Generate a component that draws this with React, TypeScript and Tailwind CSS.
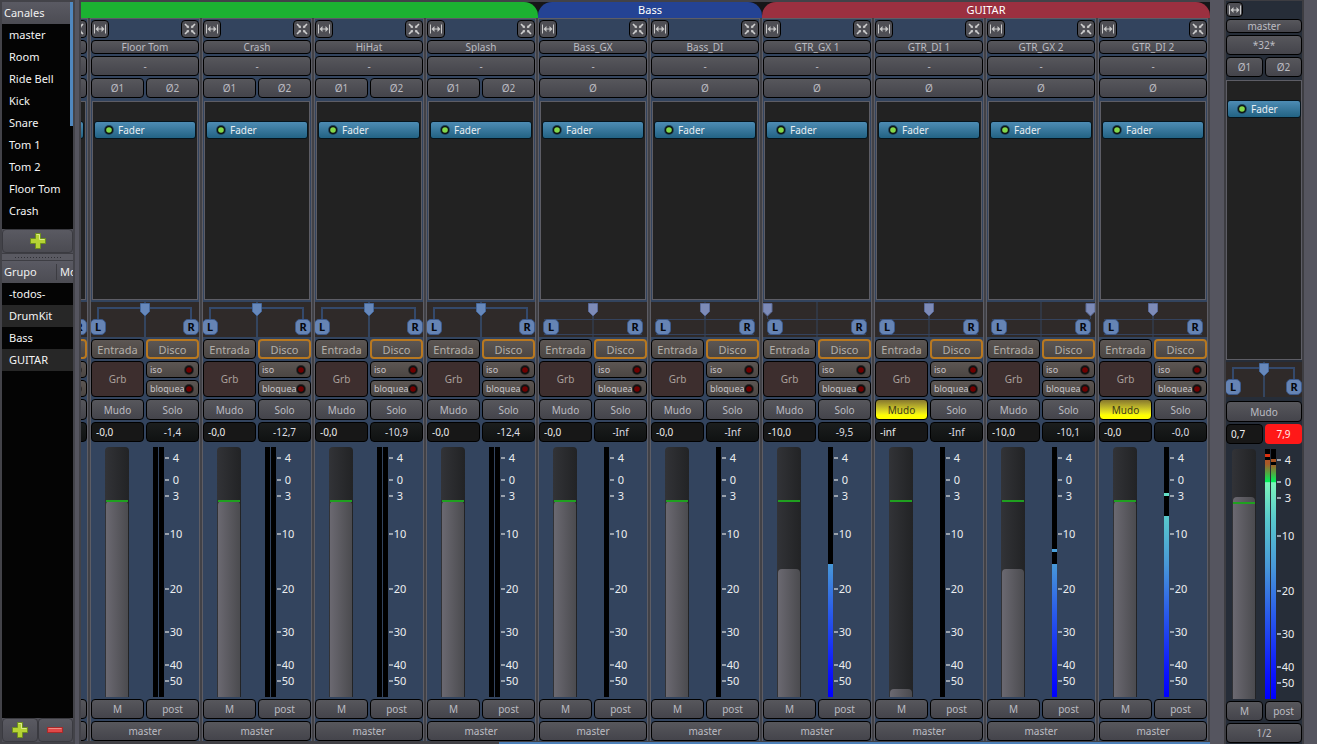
import React from "react";

type StripData = {
  name: string;
  stereo: boolean;
  pan: number;
  gain: string;
  peak: string;
  fader: number;
  muted?: boolean;
  level?: number;
  hold?: number;
  collapsed?: boolean;
};

const METER_HEIGHT = 250;

const strips: StripData[] = [
  { name: "Tom 2", stereo: true, pan: 50, gain: "", peak: "", fader: 54, collapsed: true },
  { name: "Floor Tom", stereo: true, pan: 50, gain: "-0,0", peak: "-1,4", fader: 54 },
  { name: "Crash", stereo: true, pan: 50, gain: "-0,0", peak: "-12,7", fader: 54 },
  { name: "HiHat", stereo: true, pan: 50, gain: "-0,0", peak: "-10,9", fader: 54 },
  { name: "Splash", stereo: true, pan: 50, gain: "-0,0", peak: "-12,4", fader: 54 },
  { name: "Bass_GX", stereo: false, pan: 50, gain: "-0,0", peak: "-Inf", fader: 54 },
  { name: "Bass_DI", stereo: false, pan: 50, gain: "-0,0", peak: "-Inf", fader: 54 },
  { name: "GTR_GX 1", stereo: false, pan: 0, gain: "-10,0", peak: "-9,5", fader: 122, level: 117 },
  { name: "GTR_DI 1", stereo: false, pan: 50, gain: "-inf", peak: "-Inf", fader: 242, muted: true },
  { name: "GTR_GX 2", stereo: false, pan: 100, gain: "-10,0", peak: "-10,1", fader: 122, level: 117, hold: 102 },
  { name: "GTR_DI 2", stereo: false, pan: 50, gain: "-0,0", peak: "-0,0", fader: 54, muted: true, level: 69, hold: 46 },
];

const scale: [string, number][] = [
  ["4", 11],
  ["0", 33],
  ["3", 49],
  ["10", 87],
  ["20", 142],
  ["30", 185],
  ["40", 218],
  ["50", 234],
];

const channels = ["master", "Room", "Ride Bell", "Kick", "Snare", "Tom 1", "Tom 2", "Floor Tom", "Crash", "HiHat"];
const groups = ["-todos-", "DrumKit", "Bass", "GUITAR"];

const face =
  "flex w-full min-w-0 items-center justify-center overflow-hidden whitespace-nowrap rounded border border-black bg-linear-to-b from-[#57575c] to-[#44444b] text-[10px] leading-none text-[#bcbcc2]";
const warmFace =
  "flex w-full min-w-0 items-center overflow-hidden whitespace-nowrap rounded border bg-linear-to-b from-[#5c5653] to-[#4b4643] leading-none";

function WidthIcon() {
  return (
    <svg viewBox="0 0 12 10" className="h-[10px] w-3" fill="none" stroke="#c8c8c8" strokeWidth="1">
      <path d="M.5 .5v9M11.5 .5v9M3 5h6" />
      <path d="M1.5 5L4.5 2v6zM10.5 5L7.5 2v6z" fill="#c8c8c8" stroke="none" />
    </svg>
  );
}

function CloseIcon() {
  return (
    <svg viewBox="0 0 12 12" className="size-3" fill="none" stroke="#d0d0d0" strokeWidth="1.6">
      <path d="M1 1l3.6 3.6M7.4 7.4l3.6 3.6M11 1L7.4 4.6M4.6 7.4l-3.6 3.6" />
      <path d="M4.5 2.5v2h-2M7.5 2.5v2h2M4.5 9.5v-2h-2M7.5 9.5v-2h2" strokeWidth=".5" />
    </svg>
  );
}

function PlusIcon() {
  return (
    <svg viewBox="0 0 16 16" className="size-4">
      <path d="M5.5.5h5v5h5v5h-5v5h-5v-5h-5v-5h5z" fill="#b5d334" stroke="#6d8f1e" />
      <path d="M6.5 1.5h3v5h5" fill="none" stroke="#dcec8a" />
    </svg>
  );
}

function MinusIcon() {
  return (
    <svg viewBox="0 0 16 6" className="h-[6px] w-4">
      <rect x=".5" y=".5" width="15" height="5" fill="#e04848" stroke="#a82a2a" />
      <path d="M1.5 1.5h13" stroke="#f08a84" />
    </svg>
  );
}

function Led({ lit }: { lit?: boolean }) {
  return (
    <svg viewBox="0 0 10 10" className="relative size-[10px] shrink-0">
      <circle cx="5" cy="5" r="4.9" fill={lit ? "#1d4258" : "#2c2827"} />
      <circle cx="5" cy="5" r="4" fill="#0c1010" />
      <circle cx="5" cy="5" r="2.8" fill={lit ? "#82d84b" : "#6e0000"} />
    </svg>
  );
}

function Panner({ name, width, stereo, pan }: { name: string; width: number; stereo: boolean; pan: number }) {
  const mid = Math.round(width / 2);
  const left = stereo ? -1 : 4;
  const right = stereo ? width - 16 : width - 20;
  const x = stereo ? mid : 4.5 + ((width - 9) * pan) / 100;
  return (
    <div className="relative h-[35px] bg-[#2f2a29]">
      <svg viewBox={`0 0 ${width} 35`} className="h-full w-full" fontFamily="Noto Sans, sans-serif">
        <path d={`M${mid} 0V35`} stroke="#34455f" strokeWidth={stereo ? 2 : 1} />
        {stereo ? (
          <path d={`M7 18V6H${width - 8}V18`} fill="none" stroke="#34496b" strokeWidth="2" />
        ) : (
          <path d={`M5 17.5H${width - 5}M5 32.5H${width - 5}M${x} 12V17`} stroke="#34425c" fill="none" />
        )}
        {[left, right].map((bx, i) => (
          <g key={bx}>
            <rect x={bx + 0.5} y="17.5" width="15" height="15" rx="4.5" fill="#6684b4" stroke="#3c5a8c" />
            <text x={bx + 8} y="29" textAnchor="middle" fontSize="11" fontWeight="700" fill="#05080e">
              {i ? "R" : "L"}
            </text>
          </g>
        ))}
        <path
          d={`M${x - 4.5} 1.5h9v8l-4.5 4.5l-4.5 -4.5z`}
          fill={stereo ? "#6688bb" : "#7d8bb8"}
          stroke={stereo ? "#45689c" : "#5a6a98"}
        />
      </svg>
      <input type="range" aria-label={`Pan ${name}`} defaultValue={pan} className="absolute inset-0 h-full w-full opacity-0" />
    </div>
  );
}

function Bar({ level, hold, hot }: { level?: number; hold?: number; hot?: boolean }) {
  return (
    <div className="relative h-full w-[5px] bg-[linear-gradient(to_bottom,#c04a20_0%,#a85a28_6%,#00f058_13%,#7cf5bb_13.5%,#58c8cc_28%,#4898d8_47%,#2a5cea_66%,#0c14fc_90%,#0000ff_100%)]">
      <div className="w-full bg-black" style={{ height: level ?? METER_HEIGHT }} />
      {hold !== undefined && (
        <div
          className={`absolute left-0 h-[3px] w-full ${hot ? "bg-[#d83010]" : hold < 30 ? "bg-[#a85220]" : hold < 60 ? "bg-[#62e0c8]" : "bg-[#4aa0dc]"}`}
          style={{ top: hold }}
        />
      )}
    </div>
  );
}

function FaderAndMeter({ name, fader, children, narrow, stereo, marks = true }: {
  name: string;
  fader: number;
  children: React.ReactNode;
  narrow?: boolean;
  stereo: boolean;
  marks?: boolean;
}) {
  return (
    <div className={`flex h-[250px] ${narrow ? "pl-[6px]" : "pl-[14px]"}`}>
      <div className="relative w-6 shrink-0 overflow-hidden rounded-t-sm bg-linear-to-r from-[#323337] to-[#222325] px-px">
        <div
          className="absolute inset-x-px bottom-0 rounded-t-sm bg-linear-to-r from-[#6b6971] to-[#4b4b4f]"
          style={{ top: fader }}
        />
        <div className="absolute inset-x-px top-[53px] h-[2px] bg-[#1fa01f]" />
        <input
          type="range"
          aria-label={`Fader ${name}`}
          min={0}
          max={METER_HEIGHT}
          defaultValue={METER_HEIGHT - fader}
          className="absolute inset-0 h-full w-full opacity-0 [writing-mode:vertical-lr]"
        />
      </div>
      <div className={`flex shrink-0 gap-px ${narrow ? "ml-[9px]" : stereo ? "ml-6" : "ml-[27px]"}`}>{children}</div>
      <div className="relative ml-px w-[18px] shrink-0">
        {marks && scale.map(([label, y]) => (
          <div key={label} className="absolute flex h-4 w-full -translate-y-1/2 items-center" style={{ top: y }}>
            <span className="h-[2px] w-1 shrink-0 bg-[#9aa2ad]" />
            <span className="w-[14px] shrink-0 text-center text-[11px] leading-4 text-[#eceef0]">{label}</span>
          </div>
        ))}
      </div>
    </div>
  );
}

function Phase({ labels }: { labels: string[] }) {
  return (
    <div className="flex gap-[2px]">
      {labels.map((label, i) => (
        <button key={i} aria-label={`Fase ${i + 1}`} className={`${face} h-5`}>{label}</button>
      ))}
    </div>
  );
}

function FaderProcessor({ label }: { label: string }) {
  return (
    <button className="flex h-[18px] w-full items-center gap-1 rounded-[3px] border border-[#06141c] bg-linear-to-b from-[#4d8cb4] to-[#226384] pl-[9px] text-[10px] leading-none text-[#e8eef2]">
      <Led lit />
      {label}
    </button>
  );
}

function ChannelStrip({ s }: { s: StripData }) {
  const t = (label: string) => (s.collapsed ? "" : label);
  return (
    <section aria-label={s.name} className="mr-[2px] flex w-[110px] shrink-0 flex-col gap-[2px] border-x border-t border-[#5d5d65] bg-[#33445e] pt-px">
      <div className="flex justify-between">
        <button aria-label="Ancho" className="flex size-[18px] items-center justify-center rounded border border-black bg-[#4e4e54]"><WidthIcon /></button>
        <button aria-label="Ocultar" className="flex size-[18px] items-center justify-center rounded border border-black bg-[#4e4e54]"><CloseIcon /></button>
      </div>
      <button className={`${face} h-[14px]`}>{t(s.name)}</button>
      <button className={`${face} h-5`}>{t("-")}</button>
      <Phase labels={(s.stereo ? ["Ø1", "Ø2"] : ["Ø"]).map(t)} />
      <div className="mx-px mt-px h-[199px] border border-[#5d5d65] bg-[#222222] px-px pt-[19px]">
        <FaderProcessor label={t("Fader")} />
      </div>
      <Panner name={s.name} width={108} stereo={s.stereo} pan={s.pan} />
      <div className="grid grid-cols-2 gap-[2px]">
        <button className={`${warmFace} h-5 justify-center border-black text-[11px] text-[#b3afa9]`}>{t("Entrada")}</button>
        <button className={`${warmFace} h-5 justify-center border-2 border-[#b87820] text-[11px] text-[#b3afa9]`}>{t("Disco")}</button>
        <button className="row-span-2 flex items-center justify-center rounded border border-black bg-[#3d2e2e] text-[10px] text-[#aaa09c]">{t("Grb")}</button>
        {["iso", "bloquear"].map((label) => (
          <button key={label} className={`${warmFace} h-[17px] border-black pl-[3px] pr-1 text-[9px] text-[#c8c4c8]`}>
            <span className="min-w-0 flex-1 text-left leading-4">{t(label)}</span>
            <Led />
          </button>
        ))}
      </div>
      <div className="grid grid-cols-2 gap-[2px]">
        <button className={s.muted ? "flex h-[21px] items-center justify-center rounded border border-black bg-linear-to-b from-[#87782c] to-[#ffff00] to-80% text-[10px] leading-none text-[#3c3a18]" : `${face} h-[21px]`}>{t("Mudo")}</button>
        <button className={`${face} h-[21px]`}>{t("Solo")}</button>
        <input aria-label={`Ganancia ${s.name}`} defaultValue={s.gain} className="h-5 min-w-0 rounded border border-black bg-[#171717] px-1 text-[10px] text-[#eeeeee]" />
        <button className="h-5 rounded border border-black bg-linear-to-b from-[#1b1e1e] to-[#101212] text-[10px] leading-none text-[#dedee4]">{s.peak}</button>
      </div>
      <div className="pt-[3px]">
        <FaderAndMeter name={s.name} fader={s.fader} stereo={s.stereo} marks={!s.collapsed}>
          <Bar level={s.level} hold={s.hold} />
          {s.stereo && <Bar />}
        </FaderAndMeter>
      </div>
      <div className="grid grid-cols-2 gap-[2px]">
        <button className={`${face} h-5`}>{t("M")}</button>
        <button className={`${face} h-5`}>{t("post")}</button>
      </div>
      <button className={`${face} h-5`}>{t("master")}</button>
    </section>
  );
}

function MasterStrip() {
  return (
    <section aria-label="master" className="flex w-20 shrink-0 flex-col gap-[2px] border-x-2 border-t border-[#3d3d42] bg-[#262d38] pt-px">
      <button aria-label="Ancho" className="flex h-[15px] w-[17px] items-center justify-center rounded border border-black bg-[#4e4e54]"><WidthIcon /></button>
      <button className={`${face} h-[14px]`}>master</button>
      <button className={`${face} h-5`}>*32*</button>
      <Phase labels={["Ø1", "Ø2"]} />
      <div className="mt-px h-[280px] border border-[#5d5d65] bg-[#222222] pt-[19px]">
        <FaderProcessor label="Fader" />
      </div>
      <Panner name="master" width={76} stereo pan={50} />
      <button className={`${face} mt-[2px] h-[21px]`}>Mudo</button>
      <div className="grid grid-cols-2 gap-[2px]">
        <input aria-label="Ganancia master" defaultValue="0,7" className="h-5 min-w-0 rounded border border-black bg-[#171717] px-1 text-[10px] text-[#eeeeee]" />
        <button className="h-5 rounded bg-[#ff1818] text-[10px] leading-none text-[#ffe8e8]">7,9</button>
      </div>
      <div className="pt-[3px]">
        <FaderAndMeter name="master" fader={48} narrow stereo>
          <Bar level={11} hold={5} hot />
          <Bar level={16} hold={10} />
        </FaderAndMeter>
      </div>
      <div className="grid grid-cols-2 gap-[2px]">
        <button className={`${face} h-5`}>M</button>
        <button className={`${face} h-5`}>post</button>
      </div>
      <button className={`${face} h-5`}>1/2</button>
    </section>
  );
}

function Sidebar() {
  const header = "flex h-[22px] shrink-0 items-center bg-linear-to-b from-[#5a5a63] to-[#4c4c53] text-[11px] text-[#f0f0f0]";
  const tool = "flex items-center justify-center rounded border border-[#3a3a40] bg-linear-to-b from-[#5a5a62] to-[#4b4b52]";
  return (
    <aside className="flex w-[75px] shrink-0 flex-col border-2 border-[#434349] bg-[#505058]">
      <div className="relative">
        <div className={`${header} pl-[2px]`}>Canales</div>
        <ul className="h-[205px] overflow-hidden bg-[#040404]">
          {channels.map((c) => (
            <li key={c} className="h-[22px] whitespace-nowrap pl-[7px] text-[11px] leading-[22px] text-[#f4f4f4]">{c}</li>
          ))}
        </ul>
        <div className="absolute right-0 top-0 h-[124px] w-[3px] bg-[#5088c0]" />
      </div>
      <button aria-label="Añadir canal" className={`${tool} h-6 shrink-0`}><PlusIcon /></button>
      <div className="flex h-2 shrink-0 items-center justify-center border-y border-[#3d3d43] bg-[#5a5a62]">
        <div className="h-[3px] w-12 bg-[radial-gradient(#303036_1px,transparent_1px)] bg-size-[3px_3px]" />
      </div>
      <div className={`${header} overflow-hidden whitespace-nowrap`}>
        <span className="w-[55px] shrink-0 border-r border-[#3c3c42] pl-[2px]">Grupo</span>
        <span className="pl-[3px]">Mo</span>
      </div>
      <ul className="flex-1 bg-[#040404]">
        {groups.map((g) => (
          <li key={g} className="h-[22px] pl-[7px] text-[11px] leading-[22px] text-[#f4f4f4] even:bg-[#272727]">{g}</li>
        ))}
      </ul>
      <div className="grid h-6 shrink-0 grid-cols-2">
        <button aria-label="Añadir grupo" className={tool}><PlusIcon /></button>
        <button aria-label="Quitar grupo" className={tool}><MinusIcon /></button>
      </div>
    </aside>
  );
}

export default function App() {
  return (
    <div className="flex min-h-screen w-full overflow-hidden bg-[#55555f] font-['Noto_Sans',sans-serif]">
      <Sidebar />
      <main className="ml-1 flex min-w-0 flex-1 flex-col border-l-2 border-t-2 border-[#424248] bg-[#414146]">
        <div className="flex min-w-0 justify-end overflow-hidden">
          <div className="flex shrink-0 flex-col">
            <div className="flex h-4 bg-[#161618] text-[11px] leading-4 text-white">
              <div className="w-[560px] rounded-tr-[14px] bg-[#1cb232]" />
              <div className="w-56 rounded-t-[14px] bg-[#244394] text-center">Bass</div>
              <div className="w-[448px] rounded-t-[14px] bg-[#9b3040] text-center">GUITAR</div>
            </div>
            <div className="flex">
              {strips.map((s) => (
                <ChannelStrip key={s.name} s={s} />
              ))}
            </div>
          </div>
        </div>
        <div className="flex flex-1 items-end justify-end">
          <div className="h-[2px] w-[63%] bg-[#4c80b8]" />
        </div>
      </main>
      <div className="w-[14px] shrink-0" />
      <MasterStrip />
      <div className="w-[13px] shrink-0" />
    </div>
  );
}
